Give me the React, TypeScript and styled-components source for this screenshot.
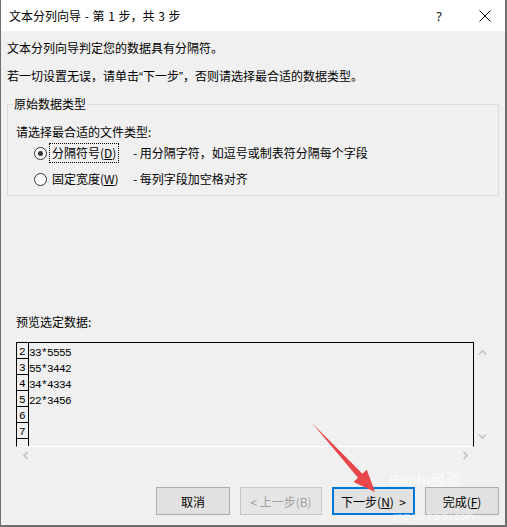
import React from 'react';
import styled, { createGlobalStyle, css } from 'styled-components';

const GlobalStyle = createGlobalStyle`
  html, body {
    margin: 0;
    padding: 0;
    background: #f0f0f0;
  }
  body {
    font-family: "Noto Sans CJK SC", "Microsoft YaHei", sans-serif;
    font-size: 12px;
    color: #000;
  }
`;

const Window = styled.div`
  position: relative;
  box-sizing: border-box;
  width: 507px;
  height: 527px;
  background: #f0f0f0;
  border-left: 1px solid #6e6e6e;
  border-right: 2px solid #6e6e6e;
  border-bottom: 2px solid #6e6e6e;
  display: flex;
  flex-direction: column;
  overflow: hidden;
`;

const TitleBar = styled.div`
  height: 31px;
  flex: none;
  background: #fff;
  display: flex;
  align-items: center;
  padding-left: 8px;
  line-height: 16px;
`;

const TitleText = styled.div`
  flex: 1;
  font-size: 12px;
  padding-top: 1px;
  word-spacing: 1px;
`;

const HelpButton = styled.div`
  width: 20px;
  text-align: center;
  font-family: "Noto Sans", "DejaVu Sans", sans-serif;
  font-size: 13px;
  color: #111;
  margin-right: 24px;
`;

const CloseButton = styled.div`
  width: 24px;
  height: 16px;
  display: flex;
  align-items: center;
  justify-content: center;
  margin-right: 8px;
`;

const Content = styled.div`
  flex: 1;
  padding: 9px 0 0 6px;
  display: flex;
  flex-direction: column;
`;

const Line = styled.div<{ $gap?: number }>`
  line-height: 16px;
  height: 16px;
  margin-top: ${(p) => p.$gap ?? 0}px;
`;

const Quote = styled.span`
  font-family: "Liberation Sans", sans-serif;
`;

const Group = styled.fieldset`
  width: 492px;
  box-sizing: border-box;
  margin: 12px 0 0 0;
  padding: 0 0 6px 0;
  border: 1px solid #dcdcdc;
  min-inline-size: 0;
`;

const Legend = styled.legend`
  margin-left: 5px;
  padding: 0 1px;
  line-height: 16px;
  height: 16px;
`;

const Hint = styled.div`
  line-height: 16px;
  height: 16px;
  margin: 12px 0 0 8px;
`;

const OptionRow = styled.div<{ $gap: number }>`
  display: flex;
  align-items: center;
  height: 20px;
  margin-top: ${(p) => p.$gap}px;
  padding-left: 26px;
`;

const Radio = styled.span<{ $checked?: boolean }>`
  width: 13px;
  height: 13px;
  box-sizing: border-box;
  border: 1px solid #333;
  border-radius: 50%;
  background: #fff;
  display: flex;
  align-items: center;
  justify-content: center;
  flex: none;

  ${(p) =>
    p.$checked &&
    css`
      &::after {
        content: '';
        width: 5px;
        height: 5px;
        border-radius: 50%;
        background: #333;
      }
    `}
`;

const LabelCell = styled.div`
  width: 84px;
  margin-left: 2px;
  flex: none;
`;

const FocusBox = styled.span<{ $focused?: boolean }>`
  display: inline-block;
  box-sizing: border-box;
  height: 20px;
  line-height: 18px;
  padding: 0 2px;
  border: 1px dotted ${(p) => (p.$focused ? '#000' : 'transparent')};
`;

const Description = styled.div`
  line-height: 18px;
`;

const PreviewLabel = styled.div`
  line-height: 16px;
  height: 16px;
  margin: 118px 0 0 9px;
`;

const PreviewArea = styled.div`
  margin: 12px 0 0 9px;
  display: grid;
  grid-template-columns: 458px 17px;
  grid-template-rows: 105px 17px;
`;

const PreviewBox = styled.div`
  box-sizing: border-box;
  border: 1px solid #000;
  border-bottom-color: #fff;
  overflow: hidden;
`;

const PreviewRow = styled.div`
  display: flex;
  height: 16px;
`;

const RowNumber = styled.div`
  width: 12px;
  height: 16px;
  box-sizing: border-box;
  border-right: 1px solid #000;
  border-bottom: 1px solid #000;
  display: flex;
  align-items: flex-end;
  padding-left: 2px;
  font-family: "Liberation Mono", "DejaVu Sans Mono", monospace;
  font-size: 11px;
  line-height: 11px;
  flex: none;
`;

const RowData = styled.div`
  font-family: "Liberation Mono", "DejaVu Sans Mono", monospace;
  font-size: 11px;
  letter-spacing: -0.6px;
  line-height: 16px;
  padding-top: 2px;
  white-space: pre;
`;

const VScroll = styled.div`
  display: flex;
  flex-direction: column;
  align-items: center;
  justify-content: space-between;
  padding: 6px 0 6px 0;
`;

const HScroll = styled.div`
  display: flex;
  align-items: center;
  justify-content: space-between;
  padding: 0 4px 0 5px;
`;

const ButtonRow = styled.div`
  display: flex;
  justify-content: flex-end;
  gap: 10px;
  margin-top: 23px;
  padding-right: 6px;
`;

const Button = styled.div<{ $width: number; $variant?: 'default' | 'disabled' }>`
  width: ${(p) => p.$width}px;
  height: 28px;
  box-sizing: border-box;
  border: 1px solid #adadad;
  background: #e1e1e1;
  display: flex;
  align-items: center;
  justify-content: center;
  font-size: 12px;

  ${(p) =>
    p.$variant === 'default' &&
    css`
      border: 2px solid #0078d7;
    `}

  ${(p) =>
    p.$variant === 'disabled' &&
    css`
      border-color: #c6c6c6;
      background: #e6e6e6;
      color: #a0a0a0;
    `}
`;

const Overlay = styled.svg`
  position: absolute;
  left: -1px;
  top: 0;
  pointer-events: none;
`;

const Watermark = styled.div`
  position: absolute;
  left: 388px;
  top: 472px;
  height: 50px;
  display: flex;
  flex-direction: column;
  justify-content: space-between;
  color: #fff;
  opacity: 0.55;
  pointer-events: none;
  line-height: 1;
`;

const WatermarkBrand = styled.div`
  font-family: "Liberation Sans", "Noto Sans CJK SC", sans-serif;
  font-size: 15px;
  font-weight: bold;
`;

const WatermarkUrl = styled.div`
  font-family: "Liberation Sans", sans-serif;
  font-size: 10px;
  padding-left: 4px;
`;

const Chevron = ({ dir }: { dir: 'up' | 'down' | 'left' | 'right' }) => {
  const rot = { up: 0, right: 90, down: 180, left: 270 }[dir];
  return (
    <svg width="9" height="9" viewBox="0 0 9 9">
      <path
        d="M1 6.5 L4.5 3 L8 6.5"
        fill="none"
        stroke="#c2c2c2"
        strokeWidth="1.6"
        transform={`rotate(${rot} 4.5 4.5)`}
      />
    </svg>
  );
};

const rows = [
  { n: '2', text: '33*5555' },
  { n: '3', text: '55*3442' },
  { n: '4', text: '34*4334' },
  { n: '5', text: '22*3456' },
  { n: '6', text: '' },
  { n: '7', text: '' },
  { n: '', text: '' },
];

export default function App() {
  return (
    <>
      <GlobalStyle />
      <Window>
        <TitleBar>
          <TitleText>文本分列向导 - 第 1 步，共 3 步</TitleText>
          <HelpButton>?</HelpButton>
          <CloseButton>
            <svg width="12" height="12" viewBox="0 0 12 12">
              <path d="M0.5 0.5 L11.5 11.5 M11.5 0.5 L0.5 11.5" stroke="#111" strokeWidth="1" />
            </svg>
          </CloseButton>
        </TitleBar>
        <Content>
          <Line>文本分列向导判定您的数据具有分隔符。</Line>
          <Line $gap={12}>
            若一切设置无误，请单击<Quote>“</Quote>下一步<Quote>”</Quote>，否则请选择最合适的数据类型。
          </Line>

          <Group>
            <Legend>原始数据类型</Legend>
            <Hint>请选择最合适的文件类型:</Hint>
            <OptionRow $gap={3}>
              <Radio $checked />
              <LabelCell>
                <FocusBox $focused>
                  分隔符号(<u>D</u>)
                </FocusBox>
              </LabelCell>
              <Description>- 用分隔字符，如逗号或制表符分隔每个字段</Description>
            </OptionRow>
            <OptionRow $gap={6}>
              <Radio />
              <LabelCell>
                <FocusBox>
                  固定宽度(<u>W</u>)
                </FocusBox>
              </LabelCell>
              <Description>- 每列字段加空格对齐</Description>
            </OptionRow>
          </Group>

          <PreviewLabel>预览选定数据:</PreviewLabel>
          <PreviewArea>
            <PreviewBox>
              {rows.map((r, i) => (
                <PreviewRow key={i}>
                  <RowNumber>{r.n}</RowNumber>
                  <RowData>{r.text}</RowData>
                </PreviewRow>
              ))}
            </PreviewBox>
            <VScroll>
              <Chevron dir="up" />
              <Chevron dir="down" />
            </VScroll>
            <HScroll>
              <Chevron dir="left" />
              <Chevron dir="right" />
            </HScroll>
          </PreviewArea>

          <ButtonRow>
            <Button $width={74}>取消</Button>
            <Button $width={82} $variant="disabled">
              &lt; 上一步(B)
            </Button>
            <Button $width={83} $variant="default">
              下一步(<u>N</u>)&nbsp;&nbsp;&gt;
            </Button>
            <Button $width={74}>
              完成(<u>F</u>)
            </Button>
          </ButtonRow>
        </Content>

        <Watermark>
          <WatermarkBrand>Baidu经验</WatermarkBrand>
          <WatermarkUrl>jingyan.baidu.com</WatermarkUrl>
        </Watermark>

        <Overlay width="507" height="527" viewBox="0 0 507 527">
          <polygon
            points="312,423 362.4,473.8 366.8,469.7 375,492 353.6,481.9 358,477.8"
            fill="#e8464a"
          />
        </Overlay>
      </Window>
    </>
  );
}
